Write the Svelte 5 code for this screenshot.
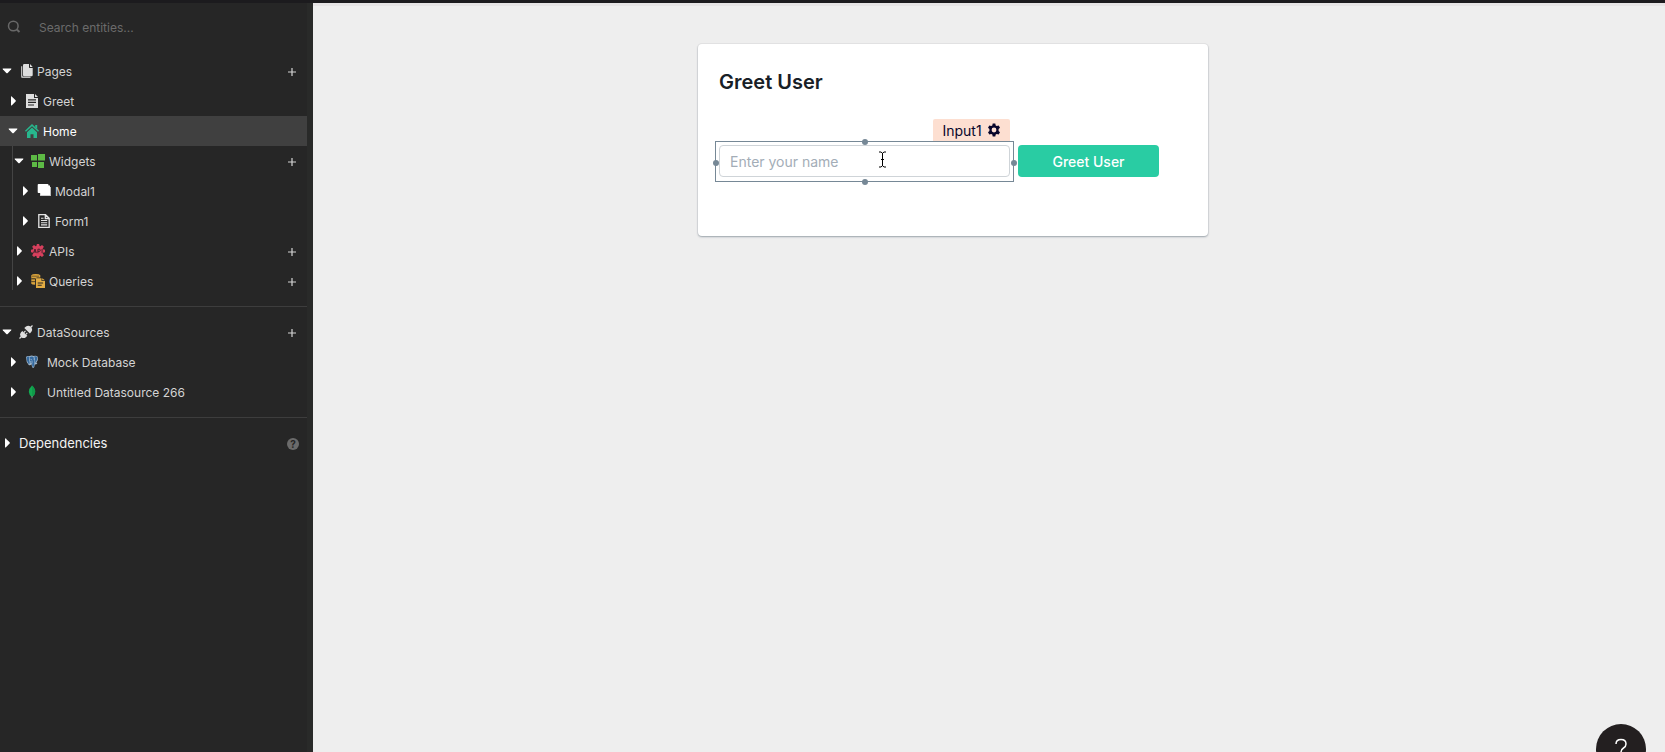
<script>
  const pages = [
    { label: 'Pages', icon: 'pages', depth: 0, open: true, add: true },
    { label: 'Greet', icon: 'page', depth: 1 },
    { label: 'Home', icon: 'home', depth: 1, open: true, active: true }
  ];
  const home = [
    { label: 'Widgets', icon: 'widgets', depth: 2, open: true, add: true },
    { label: 'Modal1', icon: 'modal', depth: 3 },
    { label: 'Form1', icon: 'form', depth: 3 },
    { label: 'APIs', icon: 'api', depth: 2, add: true },
    { label: 'Queries', icon: 'query', depth: 2, add: true }
  ];
  const sources = [
    { label: 'DataSources', icon: 'plug', depth: 0, open: true, add: true },
    { label: 'Mock Database', icon: 'postgres', depth: 1, wide: true },
    { label: 'Untitled Datasource 266', icon: 'mongo', depth: 1, wide: true }
  ];
</script>

{#snippet caret(open)}
  <svg class="caret" viewBox="0 0 14 14" aria-hidden="true">
    {#if open}
      <path d="M3 4.5h8q.8 0 .2.7L7.7 8.900q-.7.6-1.400 0L2.800 5.200q-.6-.7.2-.7z" />
    {:else}
      <path d="M5 2.600q0-.7.7-.2l3.900 3.800q.6.7 0 1.300L5.700 11.400q-.7.5-.7-.3z" />
    {/if}
  </svg>
{/snippet}

{#snippet icon(name)}
  <svg class="icon" viewBox="0 0 14 14" aria-hidden="true">
    {#if name === 'pages'}
      <path fill="#b9b9b9" d="M2 2.200h1.300v9.300q0 .9.9.9h7.300V14H3.600Q2 14 2 12.400z" />
      <path fill="#dedede" d="M5.200 0H10v3.300q0 .7.7.7h3v7q0 1.200-1.200 1.200H5.200Q4 12.200 4 11V1.200Q4 0 5.200 0z" />
      <path fill="#dedede" d="M11 0l2.700 3H11z" />
    {:else if name === 'page'}
      <path fill="#dedede" fill-rule="evenodd" d="M1 0h8v4h4v10H1zM3 5.200v1.300h8V5.200zm0 2.600v1.200h8V7.800zm0 2.600v1.200h6v-1.200z" />
      <path fill="#dedede" d="M10 0l3 3h-3z" />
    {:else if name === 'home'}
      <path fill="none" stroke="#27b78d" stroke-width="1.500" d="M.4 7.300L7 1.100l6.600 6.200" />
      <path fill="#27b78d" d="M10.200 1h2v4l-2-1.800zM7 3.600l5 4.700V14H8.500v-3.800h-3V14H2V8.300z" />
    {:else if name === 'widgets'}
      <path fill="#5dba45" d="M0 1h6v5.500H0zM7 0h7v6.500H7zM1 8h5v5H1zM7 8h6v6H7z" />
    {:else if name === 'modal'}
      <path fill="#bdbdbd" d="M3 3h11v9H3z" />
      <path fill="#fff" d="M1.500 0h9q1 0 1 1v.5H13v9.700H3.500V9h-2q-.8 0-.8-.8V1q0-1 .8-1z" />
    {:else if name === 'form'}
      <path fill="none" stroke="#e4e4e4" stroke-width="1.300" d="M1.800.7H8.500L12.200 4.300V13.300H1.800zM8.300.7v3.800h3.900" />
      <path stroke="#e4e4e4" stroke-width="1.100" d="M4 6.500h6.200M4 8.700h6.200M4 10.900h6.200M4 4.300h2.500" />
    {:else if name === 'api'}
      <path fill="#d7405d" d="M5.900 0h2.200l.5 2L9.300 2.300 11 .9l1.900 1.800-1.200 1.700.3.900 2 .5v2.400l-2 .5-.3.900 1.200 1.700L11 13.100l-1.700-1.400-.7.3-.5 2H5.900l-.5-2-.7-.3L3 13.100l-1.900-1.800 1.200-1.700L2 8.700l-2-.5V5.800l2-.5.300-.9L1.100 2.700 3 .9l1.700 1.400.7-.3z" />
      <path fill="none" stroke="#3a2028" stroke-width=".9" d="M2.500 9.100L4 5l1.300 4.100M3 7.900h2M6.900 9.200V5.200h1.300q1.100 0 1.100 1.100T8.200 7.400H6.900M11.100 5v4.200" />
    {:else if name === 'query'}
      <path fill="#d9a33c" d="M.3 1.300Q1 .1 4.700.1t4.600 1.200v2.200H5.500v1H.3zM.3 5.200h3.800v2.200H.3zM.3 8.100h3.800v2.700Q1 10.600.3 9.800z" />
      <path fill="#e1ab43" fill-rule="evenodd" d="M5 4.200h5.500v2.700H14V14H5zM6.700 8.500v1h5.400v-1zm0 2.300v1h4v-1z" />
      <path stroke="#51401f" stroke-width=".7" d="M1 2.200h7M1 4.600h3M1 7.700h3" />
      <path fill="#e1ab43" d="M11.200 4.200L14 6.300h-2.800z" />
    {:else if name === 'plug'}
      <path stroke="#dedede" stroke-width="1.300" d="M.5 13.500L3 11M11 3L13.500.5" />
      <path fill="#dedede" d="M2 7.300L3.400 5.900 8.300 10.700 6.900 12.200q-2.200 1.600-4.300.2L1.500 11.200Q.3 9.200 2 7.300zM5.300 3.100L7 1.500q2.200-1.500 4.100-.2l1.500 1.500q1.200 2-.2 4L10.900 8.500z" />
      <path stroke="#dedede" stroke-width="1.100" d="M5 7.500l1.500-1.600M6.900 9.300l1.400-1.500" />
    {:else if name === 'postgres'}
      <path fill="#9fb6cb" d="M1 2q1-1.500 3.500-1 2.500-.9 4 0 3-.8 4.200.8.900 3-1.300 6l1 .7q-1 1-2.700.9-.1 3-1.400 3.500-1.600 0-1.700-3.600Q5.200 11 3.700 10 1 7 1 2z" />
      <path fill="#356a9f" d="M1.600 2.400Q2.500 1.200 4.500 1.700 3.800 4.200 4.700 8.200l-.8 1.100Q1.600 6 1.600 2.400zM5 2Q7.400.8 8.900 2.800q1 2.200.5 5.800Q8.900 12.300 8 12.300q-.9-.4-1-3.900L5.400 8Q6.700 6.500 5 5.800zM9.200 1.500q2.200-.5 3 .8.400 2.500-1.900 5.700Q10.300 4 9.200 1.500z" />
      <path stroke="#c8d5e1" stroke-width=".6" fill="none" d="M5.500 4.300l1.300.2M8.400 4l1.200.2M7 5.500v3" />
    {:else if name === 'mongo'}
      <path fill="#13aa52" d="M7 .5q3.400 3 3.200 6.600-.2 3.200-3.200 5Q4 10.300 3.800 7.100 3.700 3.500 7 .5z" />
      <path fill="#109a49" d="M7 .5q3.400 3 3.200 6.600-.2 3.200-3.200 5z" />
      <path stroke="#b8c4b2" stroke-width=".6" d="M7 11V13.500" />
    {/if}
  </svg>
{/snippet}

{#snippet row(item)}
  <li class="row" class:active={item.active} style="padding-left: {item.depth * 6}px">
    <button class="entity" class:wide={item.wide} aria-expanded={!!item.open}>
      {@render caret(item.open)}
      {@render icon(item.icon)}
      <span>{item.label}</span>
    </button>
    {#if item.add}
      <button class="add" aria-label="Add to {item.label}">
        <svg viewBox="0 0 10 10" aria-hidden="true"><path d="M5 1v8M1 5h8" /></svg>
      </button>
    {/if}
  </li>
{/snippet}

<div class="app">
  <header class="topbar"></header>
  <div class="workspace">
    <nav class="sidebar" aria-label="Entity explorer">
      <div class="explorer">
        <label class="search">
          <svg viewBox="0 0 14 14" aria-hidden="true">
            <circle cx="6.300" cy="6" r="4.800" /><path d="M9.800 9.500l2.700 2.500" stroke-width="2" />
          </svg>
          <input type="text" placeholder="Search entities..." aria-label="Search entities" />
        </label>
        <ul>{#each pages as item}{@render row(item)}{/each}</ul>
        <ul class="branch">{#each home as item}{@render row(item)}{/each}</ul>
        <hr />
        <ul>{#each sources as item}{@render row(item)}{/each}</ul>
        <hr />
        <div class="row dependencies">
          <button class="entity" aria-expanded="false">{@render caret(false)}<span>Dependencies</span></button>
          <button class="info" aria-label="About dependencies">?</button>
        </div>
      </div>
    </nav>

    <main class="canvas">
      <form class="card" onsubmit={(e) => e.preventDefault()}>
        <h1>Greet User</h1>
        <div class="fields">
          <div class="selected">
            <button type="button" class="tag">
              <span>Input1</span>
              <svg viewBox="0 0 14 14" aria-hidden="true">
                <path fill-rule="evenodd" d="M5.700.6h2.600l.4 1.900 1.100.6 1.900-.6L13 4.800 11.600 6.100v1.800L13 9.200l-1.300 2.300-1.900-.6-1.100.6-.4 1.900H5.700l-.4-1.900-1.100-.6-1.900.6L1 9.200l1.400-1.300V6.100L1 4.800l1.300-2.300 1.900.6 1.100-.6zM7 4.600a2.400 2.400 0 1 0 0 4.800 2.400 2.400 0 0 0 0-4.800z" />
              </svg>
            </button>
            <input type="text" placeholder="Enter your name" aria-label="Name" />
            <i class="handle top"></i>
            <i class="handle right"></i>
            <i class="handle bottom"></i>
            <i class="handle left"></i>
            <svg class="cursor" viewBox="0 0 9 17" aria-hidden="true">
              <path d="M1 1h2l1.500 1.300L6 1h2M4.500 2v13M3 8.500h3M1 16h2l1.500-1.300L6 16h2" />
            </svg>
          </div>
          <button class="submit">Greet User</button>
        </div>
      </form>
      <button class="help" aria-label="Help">
        <svg viewBox="0 0 14 22" aria-hidden="true">
          <path d="M2 6q0-4.500 5-4.500t5 4.500q0 2.500-2.500 4T7 14v2M7 19v2" />
        </svg>
      </button>
    </main>
  </div>
</div>

<style>
  :global(body) { margin: 0; }
  .app {
    display: flex;
    flex-direction: column;
    height: 100vh;
    overflow: hidden;
    font-family: Inter, "Liberation Sans", sans-serif;
    background: #eee;
  }
  .app *, .app { box-sizing: border-box; }
  button { border: 0; padding: 0; font: inherit; color: inherit; background: none; cursor: pointer; }
  input { font: inherit; outline: 0; }
  .topbar { flex: none; height: 3px; background: #1c1b1e; }
  .workspace { display: flex; flex: 1; min-height: 0; }
  .sidebar { flex: none; width: 313px; padding-right: 6px; background: #292a29; }
  .explorer { height: 100%; background: #262626; color: #d4d4d4; font-size: 12px; }
  .search { display: flex; align-items: center; gap: 18px; height: 48px; padding-left: 7px; margin-bottom: 5px; }
  .search svg { width: 14px; height: 14px; fill: none; stroke: #686868; stroke-width: 1.500; }
  .search input { flex: 1; min-width: 0; border: 0; padding: 0; background: none; color: #d4d4d4; font-size: 12px; }
  .search input::placeholder { color: #6b6b6b; opacity: 1; }
  ul { list-style: none; margin: 0; padding: 0; }
  .row { display: flex; align-items: center; height: 30px; }
  .row.active { background: #404040; color: #fff; }
  .entity { display: flex; align-items: center; flex: 1; height: 100%; text-align: left; }
  .caret { width: 14px; height: 14px; margin-right: 5px; fill: #fff; }
  .icon { width: 14px; height: 14px; margin-right: 4px; }
  .wide .icon { margin-right: 8px; }
  .add { display: grid; place-items: center; width: 30px; height: 30px; padding-top: 2px; }
  .add svg { width: 10px; height: 10px; stroke: #d4d4d4; stroke-width: 1.200; }
  .branch { position: relative; }
  .branch::before { content: ""; position: absolute; left: 12px; top: 0; bottom: 6px; width: 1px; background: #444; }
  hr { height: 1px; margin: 10px 0; border: 0; background: #3d3d3d; }
  .dependencies { color: #f2f2f2; font-size: 13px; }
  .info {
    width: 12px; height: 12px; margin: 2px 8px 0 0; border-radius: 50%;
    background: #6b6b6b; color: #262626; font-size: 10px; font-weight: 700; line-height: 12px; text-align: center;
  }
  .canvas {
    position: relative;
    display: flex;
    flex: 1;
    align-items: flex-start;
    justify-content: center;
    min-width: 0;
    padding: 38px 72px 0 0;
    border-top: 3px solid #e6e4e5;
    background: #eee;
  }
  .card {
    width: 510px;
    padding: 24px 20px 54px 17px;
    border-radius: 4px;
    background: #fff;
    box-shadow: 0 0 0 1px rgba(16, 22, 26, 0.04), 0 1px 2px rgba(16, 42, 66, 0.35);
  }
  h1 { margin: 0 0 45px 4px; color: #182026; font-size: 20px; font-weight: 600; line-height: 28px; }
  .fields { display: flex; align-items: flex-start; gap: 4px; }
  .selected { position: relative; width: 299px; padding: 3px 3px 4px; border: 1px solid #768896; }
  .selected input {
    display: block; width: 100%; height: 32px; padding: 0 10px;
    border: 1px solid #cfd4d8; border-radius: 4px; background: #fff; color: #182026; font-size: 14px;
  }
  .selected input::placeholder { color: #a3adb7; opacity: 1; }
  .handle { position: absolute; width: 6px; height: 6px; border-radius: 50%; background: #768896; }
  .top { top: -3px; left: 50%; margin-left: -3px; }
  .bottom { bottom: -4px; left: 50%; margin-left: -3px; }
  .left { left: -3px; top: 50%; margin-top: -2px; }
  .right { right: -4px; top: 50%; margin-top: -2px; }
  .tag {
    position: absolute; right: 3px; bottom: calc(100% + 1px); display: flex; align-items: center; justify-content: center; gap: 5px;
    width: 77px; height: 22px; border-radius: 2px 2px 0 0;
    background: #fddfd1; color: #08062b; font-size: 14px;
  }
  .tag svg { width: 14px; height: 14px; fill: currentColor; }
  .cursor { position: absolute; left: 162px; top: 9px; width: 9px; height: 17px; fill: none; stroke: #000; pointer-events: none; }
  .submit { width: 141px; height: 32px; margin-top: 4px; border-radius: 4px; background: #29cca3; color: #fff; font-size: 14px; font-weight: 500; }
  .help {
    position: absolute; right: 19px; bottom: -22px; display: grid; place-items: center;
    width: 50px; height: 50px; border-radius: 50%; background: #231f20;
  }
  .help svg { width: 14px; height: 22px; fill: none; stroke: #fff; stroke-width: 1.500; }
</style>
